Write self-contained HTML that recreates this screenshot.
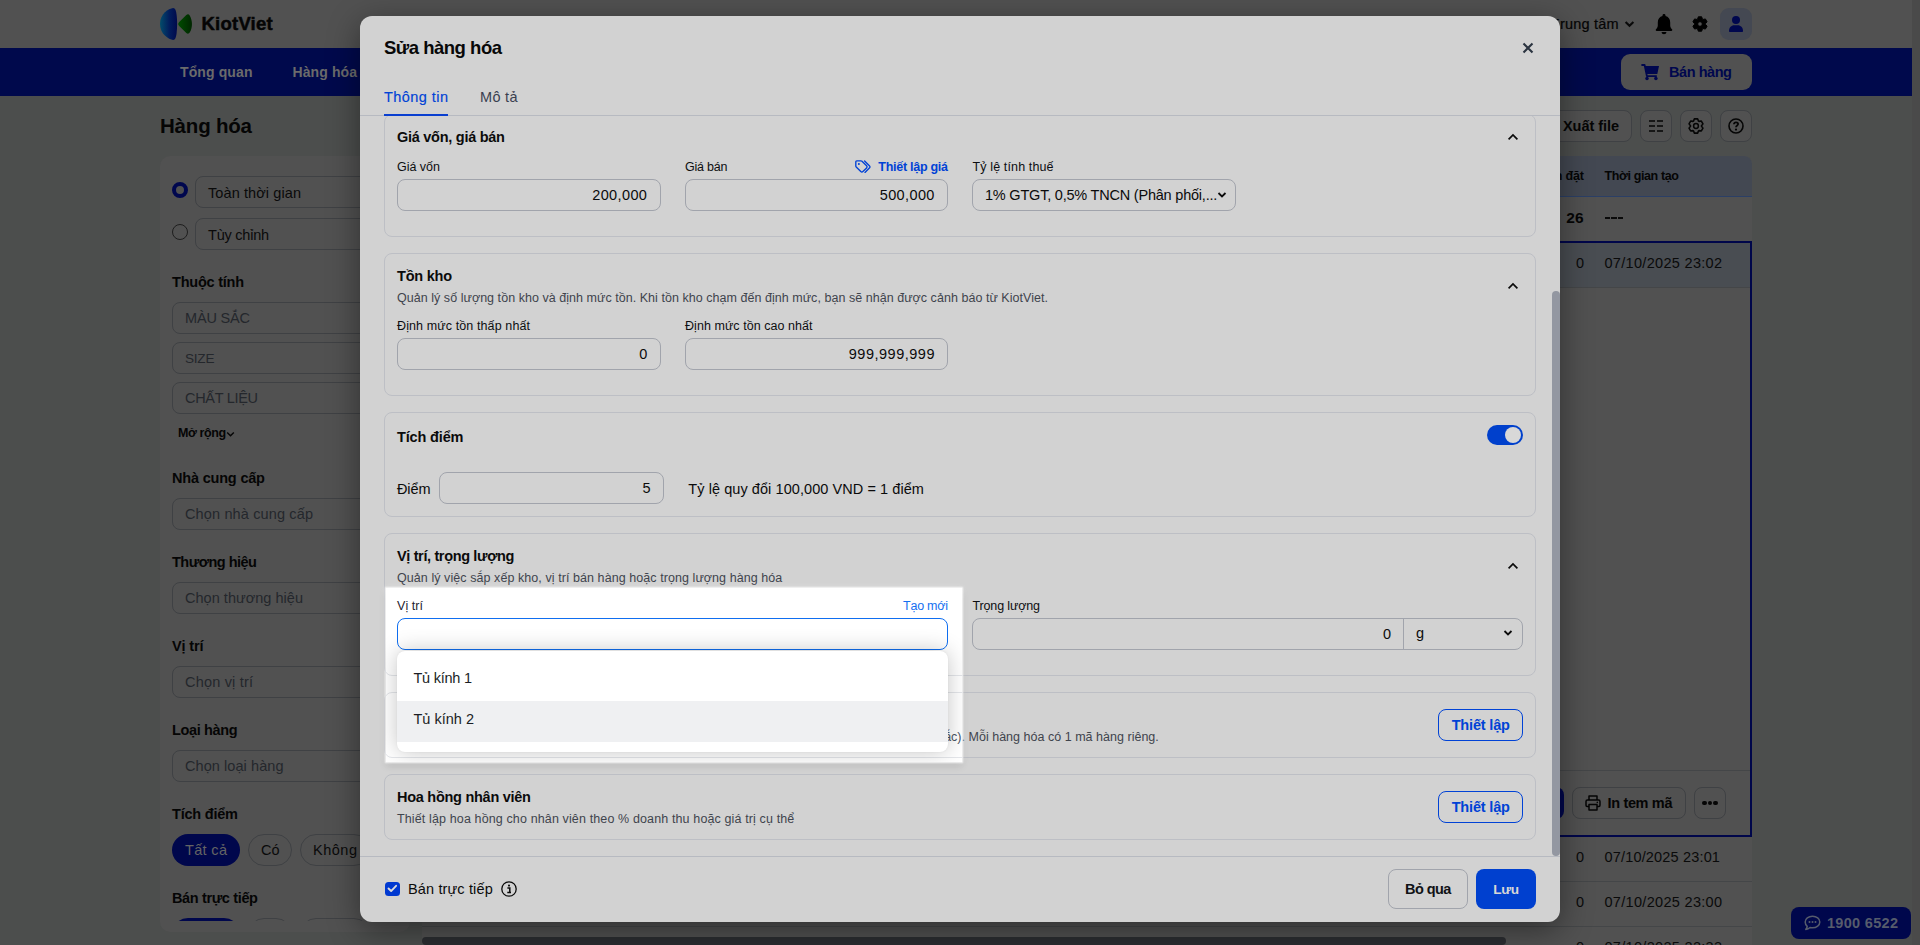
<!DOCTYPE html>
<html lang="vi"><head><meta charset="utf-8"><title>KiotViet - Sửa hàng hóa</title><style>
html,body{margin:0;padding:0}
body{width:1920px;height:945px;overflow:hidden;position:relative;background:#4c4e4d;font-family:"Liberation Sans",sans-serif}
.a{position:absolute;box-sizing:border-box}
.t{position:absolute;white-space:nowrap;line-height:1}
.L{position:absolute;left:0;top:0;width:1920px;height:945px}
svg{position:absolute;overflow:visible}
</style></head><body>
<div class="L" id="page">
<div class="a" style="left:0px;top:0px;width:1912px;height:48px;background:#515151;"></div>
<div class="a" style="left:1912px;top:0px;width:8px;height:945px;background:#4a4a4a;"></div>
<svg style="left:160px;top:8px" width="33" height="32" viewBox="0 0 33 32">
<defs><linearGradient id="lg1" x1="0" y1="0" x2="1" y2="0"><stop offset="0" stop-color="#034c6a"></stop><stop offset=".55" stop-color="#021d5c"></stop><stop offset="1" stop-color="#000a4c"></stop></linearGradient>
<linearGradient id="lg2" x1="0" y1="0" x2="1" y2="0"><stop offset="0" stop-color="#004c00"></stop><stop offset="1" stop-color="#002600"></stop></linearGradient></defs>
<path d="M13.2 0.1 C15.2 0.2 16.1 2.6 16.6 6.8 C17.3 12.9 17.3 19.1 16.6 25.2 C16.1 29.4 15.2 31.8 13.2 31.9 C8.6 31.4 0 26.2 0 16 C0 5.8 8.6 0.6 13.2 0.1Z" fill="url(#lg1)"></path>
<path d="M18.2 16 C18.2 15.3 18.6 14.7 19.2 14.1 L26.3 7 C27.5 5.9 28.9 6 29.7 7.4 C32.7 12.8 32.7 19.2 29.7 24.6 C28.9 26 27.5 26.1 26.3 25 L19.2 17.9 C18.6 17.3 18.2 16.7 18.2 16Z" fill="url(#lg2)"></path>
</svg>
<span class="t" style="top: 14.75px; font-size: 18.5px; color: rgb(5, 5, 5); left: 201.5px; font-weight: 700; -webkit-text-stroke: 0.45px rgb(5, 5, 5); letter-spacing: 0.23px;">KiotViet</span>
<span class="t" style="top:16.75px;font-size:14.5px;color:#0a0a0a;right:360.79999999999995px;">T</span>
<span class="t" style="top: 16.75px; font-size: 14.5px; color: rgb(5, 5, 5); left: 1560px; -webkit-text-stroke: 0.2px rgb(5, 5, 5); letter-spacing: 0.18px;">rung tâm</span>
<svg style="left:1624px;top:19px" width="11" height="10" viewBox="0 0 11 10"><path d="M1.6 3 L5.5 6.8 L9.4 3" fill="none" stroke="#0a0a0a" stroke-width="2.1"></path></svg>
<svg style="left:1655px;top:13px" width="18" height="22" viewBox="0 0 18 22"><path d="M9 1 C9.9 1 10.5 1.6 10.5 2.4 L10.5 3 C13.4 3.7 15.2 6.2 15.2 9.3 L15.2 12.5 C15.2 14 15.9 15.3 17 16.3 C17.6 16.9 17.3 18 16.3 18 L1.7 18 C0.7 18 0.4 16.9 1 16.3 C2.1 15.3 2.8 14 2.8 12.5 L2.8 9.3 C2.8 6.2 4.6 3.7 7.5 3 L7.5 2.4 C7.5 1.6 8.1 1 9 1Z M6.6 19 L11.4 19 C11.4 20.3 10.3 21.3 9 21.3 C7.7 21.3 6.6 20.3 6.6 19Z" fill="#000"></path></svg>
<svg style="left:1692px;top:16px" width="16" height="16" viewBox="0 0 16 16"><path fill="#000" fill-rule="evenodd" stroke="#000" stroke-width="1" stroke-linejoin="round" d="M5.55 3.19 L6.34 0.79 L9.66 0.79 L10.45 3.19 L10.94 3.47 L13.41 2.95 L15.08 5.84 L13.39 7.72 L13.39 8.28 L15.08 10.16 L13.41 13.05 L10.94 12.53 L10.45 12.81 L9.66 15.21 L6.34 15.21 L5.55 12.81 L5.06 12.53 L2.59 13.05 L0.92 10.16 L2.61 8.28 L2.61 7.72 L0.92 5.84 L2.59 2.95 L5.06 3.47Z M8 5.7 A2.3 2.3 0 1 0 8 10.3 A2.3 2.3 0 1 0 8 5.7Z"></path></svg>
<div class="a" style="left:1720px;top:8px;width:32px;height:32px;background:#444852;border-radius:9px;"></div>
<svg style="left:1729px;top:16px" width="14" height="16" viewBox="0 0 14 16"><circle cx="7" cy="4" r="4" fill="#00074e"></circle><path d="M0 15 C0 11.5 2.5 9.3 5 9.3 L9 9.3 C11.5 9.3 14 11.5 14 15 C14 15.6 13.6 16 13 16 L1 16 C0.4 16 0 15.6 0 15Z" fill="#00074e"></path></svg>
<div class="a" style="left:0px;top:48px;width:1912px;height:48px;background:#00094c;"></div>
<span class="t" style="top: 65px; font-size: 14px; color: rgb(107, 107, 107); left: 180px; font-weight: 700; letter-spacing: 0.12px;">Tổng quan</span>
<span class="t" style="top: 65px; font-size: 14px; color: rgb(107, 107, 107); left: 292.5px; font-weight: 700; letter-spacing: 0.1px;">Hàng hóa</span>
<div class="a" style="left:1621px;top:54px;width:131px;height:36px;background:#515151;border-radius:9px;"></div>
<svg style="left:1641px;top:64px" width="18" height="16" viewBox="0 0 18 16"><path d="M0.4 1 H3.6 L5.9 12.1 H15.8" fill="none" stroke="#00074e" stroke-width="1.8" stroke-linejoin="round"></path><path d="M3.9 1.9 L18 1.9 L16.3 9.9 L5.4 9.9Z" fill="#00074e"></path><circle cx="6" cy="14.4" r="1.75" fill="#00074e"></circle><circle cx="14.9" cy="14.4" r="1.75" fill="#00074e"></circle></svg>
<span class="t" style="top: 64.75px; font-size: 14.5px; color: rgb(0, 7, 78); left: 1669px; font-weight: 700; letter-spacing: -0.44px;">Bán hàng</span>
<span class="t" style="top: 115.75px; font-size: 20.5px; color: rgb(5, 5, 5); left: 160px; font-weight: 700; letter-spacing: -0.2px;">Hàng hóa</span>
<div class="a" style="left:160px;top:156px;width:250px;height:776px;background:#515151;border-radius:10px"></div>
<div class="L" style="clip-path:inset(156px 1510px 24px 160px)">
<div class="a" style="left:172px;top:182px;width:16px;height:16px;border:4.5px solid #00074e;border-radius:8px;"></div>
<div class="a" style="left:172px;top:224px;width:16px;height:16px;border:1px solid #1e1e1e;border-radius:8px;"></div>
<div class="a" style="left:195px;top:176px;width:260px;height:32px;border:1px solid #3f4144;border-radius:8px;"></div>
<div class="a" style="left:195px;top:218px;width:260px;height:32px;border:1px solid #3f4144;border-radius:8px;"></div>
<span class="t" style="top: 186.05px; font-size: 14.5px; color: rgb(10, 10, 10); left: 208px; letter-spacing: 0.1px;">Toàn thời gian</span>
<span class="t" style="top: 228.05px; font-size: 14.5px; color: rgb(10, 10, 10); left: 208px; letter-spacing: -0.23px;">Tùy chỉnh</span>
<span class="t" style="top: 274.75px; font-size: 14.5px; color: rgb(5, 5, 5); left: 172px; font-weight: 700; letter-spacing: -0.23px;">Thuộc tính</span>
<div class="a" style="left:172px;top:302px;width:280px;height:32px;border:1px solid #3f4144;border-radius:8px;"></div>
<span class="t" style="top: 311.25px; font-size: 14.5px; color: rgb(36, 39, 44); left: 185px; letter-spacing: -0.18px;">MÀU SẮC</span>
<div class="a" style="left:172px;top:342px;width:280px;height:32px;border:1px solid #3f4144;border-radius:8px;"></div>
<span class="t" style="top: 351.7px; font-size: 13.6px; color: rgb(36, 39, 44); left: 185px; letter-spacing: -0.24px;">SIZE</span>
<div class="a" style="left:172px;top:382px;width:280px;height:32px;border:1px solid #3f4144;border-radius:8px;"></div>
<span class="t" style="top: 391.25px; font-size: 14.5px; color: rgb(36, 39, 44); left: 185px; letter-spacing: -0.31px;">CHẤT LIỆU</span>
<span class="t" style="top: 427.25px; font-size: 12.5px; color: rgb(5, 5, 5); left: 178px; font-weight: 700; letter-spacing: -0.42px;">Mở rộng</span>
<svg style="left:226px;top:430.5px" width="9" height="7" viewBox="0 0 9 7"><path d="M1.2 1.5 L4.5 4.8 L7.8 1.5" fill="none" stroke="#050505" stroke-width="1.4"></path></svg>
<span class="t" style="top: 470.75px; font-size: 14.5px; color: rgb(5, 5, 5); left: 172px; font-weight: 700; letter-spacing: -0.19px;">Nhà cung cấp</span>
<div class="a" style="left:172px;top:498px;width:280px;height:32px;border:1px solid #3f4144;border-radius:8px;"></div>
<span class="t" style="top: 507.25px; font-size: 14.5px; color: rgb(36, 39, 44); left: 185px; letter-spacing: 0.14px;">Chọn nhà cung cấp</span>
<span class="t" style="top: 554.75px; font-size: 14.5px; color: rgb(5, 5, 5); left: 172px; font-weight: 700; letter-spacing: -0.51px;">Thương hiệu</span>
<div class="a" style="left:172px;top:582px;width:280px;height:32px;border:1px solid #3f4144;border-radius:8px;"></div>
<span class="t" style="top: 591.25px; font-size: 14.5px; color: rgb(36, 39, 44); left: 185px; letter-spacing: 0.03px;">Chọn thương hiệu</span>
<span class="t" style="top: 638.75px; font-size: 14.5px; color: rgb(5, 5, 5); left: 172px; font-weight: 700; letter-spacing: -0.15px;">Vị trí</span>
<div class="a" style="left:172px;top:666px;width:280px;height:32px;border:1px solid #3f4144;border-radius:8px;"></div>
<span class="t" style="top: 675.25px; font-size: 14.5px; color: rgb(36, 39, 44); left: 185px; letter-spacing: 0.19px;">Chọn vị trí</span>
<span class="t" style="top: 722.75px; font-size: 14.5px; color: rgb(5, 5, 5); left: 172px; font-weight: 700; letter-spacing: -0.37px;">Loại hàng</span>
<div class="a" style="left:172px;top:750px;width:280px;height:32px;border:1px solid #3f4144;border-radius:8px;"></div>
<span class="t" style="top: 759.25px; font-size: 14.5px; color: rgb(36, 39, 44); left: 185px; letter-spacing: 0.07px;">Chọn loại hàng</span>
<span class="t" style="top: 806.75px; font-size: 14.5px; color: rgb(5, 5, 5); left: 172px; font-weight: 700; letter-spacing: -0.21px;">Tích điểm</span>
<div class="a" style="left:172px;top:834px;width:68px;height:32px;background:#00074c;border-radius:16px;"></div>
<span class="t" style="top: 843.25px; font-size: 14.5px; color: rgb(100, 100, 100); left: 185px; letter-spacing: 0.34px;">Tất cả</span>
<div class="a" style="left:248px;top:834px;width:44px;height:32px;border:1px solid #3f4144;border-radius:16px;"></div>
<span class="t" style="top: 843.25px; font-size: 14.5px; color: rgb(10, 10, 10); left: 261px; letter-spacing: -0.05px;">Có</span>
<div class="a" style="left:300px;top:834px;width:70px;height:32px;border:1px solid #3f4144;border-radius:16px;"></div>
<span class="t" style="top: 843.25px; font-size: 14.5px; color: rgb(10, 10, 10); left: 313px; letter-spacing: 0.52px;">Không</span>
<span class="t" style="top: 890.75px; font-size: 14.5px; color: rgb(5, 5, 5); left: 172px; font-weight: 700; letter-spacing: -0.36px;">Bán trực tiếp</span>
<div class="a" style="left:172px;top:918px;width:68px;height:32px;background:#00074c;border-radius:16px;"></div>
<span class="t" style="top: 927.25px; font-size: 14.5px; color: rgb(100, 100, 100); left: 185px; letter-spacing: 0.34px;">Tất cả</span>
<div class="a" style="left:248px;top:918px;width:44px;height:32px;border:1px solid #3f4144;border-radius:16px;"></div>
<span class="t" style="top: 927.25px; font-size: 14.5px; color: rgb(10, 10, 10); left: 261px; letter-spacing: -0.05px;">Có</span>
<div class="a" style="left:300px;top:918px;width:70px;height:32px;border:1px solid #3f4144;border-radius:16px;"></div>
<span class="t" style="top: 927.25px; font-size: 14.5px; color: rgb(10, 10, 10); left: 313px; letter-spacing: 0.52px;">Không</span>
</div>
<div class="a" style="left:1500px;top:110px;width:132px;height:32px;background:#515151;border:1px solid #3f4144;border-radius:8px;"></div>
<span class="t" style="top: 119.25px; font-size: 14.5px; color: rgb(5, 5, 5); left: 1563px; font-weight: 700; letter-spacing: -0.05px;">Xuất file</span>
<div class="a" style="left:1640px;top:110px;width:32px;height:32px;background:#515151;border:1px solid #3f4144;border-radius:8px;"></div>
<div class="a" style="left:1680px;top:110px;width:32px;height:32px;background:#515151;border:1px solid #3f4144;border-radius:8px;"></div>
<div class="a" style="left:1720px;top:110px;width:32px;height:32px;background:#515151;border:1px solid #3f4144;border-radius:8px;"></div>
<svg style="left:1648px;top:119px" width="16" height="14" viewBox="0 0 16 14"><g stroke="#050505" stroke-width="1.7"><path d="M1 2 H7 M9 2 H15 M1 7 H7 M9 7 H15 M1 12 H7 M9 12 H15"></path></g></svg>
<svg style="left:1688px;top:118px" width="16" height="16" viewBox="0 0 16 16"><path fill="none" stroke="#050505" stroke-width="1.55" stroke-linejoin="round" d="M5.50 3.10 L6.36 0.89 L9.64 0.89 L10.50 3.10 L11.00 3.39 L13.34 3.02 L14.98 5.87 L13.49 7.71 L13.49 8.29 L14.98 10.13 L13.34 12.98 L11.00 12.61 L10.50 12.90 L9.64 15.11 L6.36 15.11 L5.50 12.90 L5.00 12.61 L2.66 12.98 L1.02 10.13 L2.51 8.29 L2.51 7.71 L1.02 5.87 L2.66 3.02 L5.00 3.39Z"></path><circle cx="8" cy="8" r="2.4" fill="none" stroke="#050505" stroke-width="1.5"></circle></svg>
<svg style="left:1728px;top:118px" width="16" height="16" viewBox="0 0 16 16"><circle cx="8" cy="8" r="7" fill="none" stroke="#050505" stroke-width="1.6"></circle><path d="M5.9 6.3 C5.9 5 6.8 4.3 8 4.3 C9.2 4.3 10.1 5 10.1 6.1 C10.1 7.5 8 7.5 8 9.3" fill="none" stroke="#050505" stroke-width="1.8"></path><circle cx="8" cy="11.6" r="1.1" fill="#050505"></circle></svg>
<div class="a" style="left:422px;top:156px;width:1330px;height:789px;background:#515151;border-radius:8px 8px 0 0;overflow:hidden">
<div class="a" style="left:0;top:0;width:1330px;height:40px;background:#434852"></div>
<div class="a" style="left:0;top:40px;width:1330px;height:1px;background:#2b3f66"></div>
<div class="a" style="left:0;top:87px;width:1330px;height:45px;background:#494d52"></div>
<div class="a" style="left:0;top:131px;width:1330px;height:1px;background:#444648"></div>
</div>
<span class="t" style="top: 169.75px; font-size: 12.5px; color: rgb(5, 5, 5); left: 1565.5px; font-weight: 700; letter-spacing: -0.12px;">đặt</span>
<span class="t" style="top:169.75px;font-size:12.5px;color:#050505;right:357.5px;font-weight:700;">n</span>
<span class="t" style="top: 169.75px; font-size: 12.5px; color: rgb(5, 5, 5); left: 1604.5px; font-weight: 700; letter-spacing: -0.38px;">Thời gian tạo</span>
<span class="t" style="top: 209.75px; font-size: 15.5px; color: rgb(5, 5, 5); right: 336px; font-weight: 700; letter-spacing: 0.25px;">26</span>
<div class="a" style="left:1605px;top:217px;width:5.2px;height:1.5px;background:#0a0a0a;"></div>
<div class="a" style="left:1611.4px;top:217px;width:5.2px;height:1.5px;background:#0a0a0a;"></div>
<div class="a" style="left:1617.8px;top:217px;width:5.2px;height:1.5px;background:#0a0a0a;"></div>
<div class="a" style="left:422px;top:241px;width:1330px;height:596px;border:2px solid #00064a;"></div>
<span class="t" style="top:256.25px;font-size:14.5px;color:#0a0a0a;right:336px;">0</span>
<span class="t" style="top: 256.25px; font-size: 14.5px; color: rgb(10, 10, 10); left: 1604.5px; letter-spacing: 0.31px;">07/10/2025 23:02</span>
<div class="a" style="left:424px;top:770px;width:1326px;height:1px;background:#444648;"></div>
<div class="a" style="left:1450px;top:787px;width:114px;height:32px;background:#00074c;border-radius:8px;"></div>
<div class="a" style="left:1572px;top:787px;width:114px;height:32px;border:1px solid #3f4144;border-radius:8px;"></div>
<svg style="left:1585px;top:795px" width="16" height="16" viewBox="0 0 16 16"><g fill="none" stroke="#050505" stroke-width="1.5" stroke-linejoin="round"><path d="M4 5 V1 H12 V5"></path><path d="M4 11.5 H2.2 C1.5 11.5 1 11 1 10.3 V6.5 C1 5.7 1.6 5 2.4 5 H13.6 C14.4 5 15 5.7 15 6.5 V10.3 C15 11 14.5 11.5 13.8 11.5 H12"></path><path d="M4 9.5 H12 V15 H4Z"></path></g><circle cx="12.3" cy="7.4" r=".8" fill="#050505"></circle></svg>
<span class="t" style="top: 796.25px; font-size: 14.5px; color: rgb(5, 5, 5); left: 1607.5px; font-weight: 700; letter-spacing: -0.34px;">In tem mã</span>
<div class="a" style="left:1694px;top:787px;width:32px;height:32px;border:1px solid #3f4144;border-radius:8px;"></div>
<div class="a" style="left:1702.4px;top:800.9px;width:4.2px;height:4.2px;background:#050505;border-radius:2.1px;"></div>
<div class="a" style="left:1707.9px;top:800.9px;width:4.2px;height:4.2px;background:#050505;border-radius:2.1px;"></div>
<div class="a" style="left:1713.4px;top:800.9px;width:4.2px;height:4.2px;background:#050505;border-radius:2.1px;"></div>
<span class="t" style="top:850.25px;font-size:14.5px;color:#0a0a0a;right:336px;">0</span>
<span class="t" style="top: 850.25px; font-size: 14.5px; color: rgb(10, 10, 10); left: 1604.5px; letter-spacing: 0.17px;">07/10/2025 23:01</span>
<span class="t" style="top:895.25px;font-size:14.5px;color:#0a0a0a;right:336px;">0</span>
<span class="t" style="top: 895.25px; font-size: 14.5px; color: rgb(10, 10, 10); left: 1604.5px; letter-spacing: 0.31px;">07/10/2025 23:00</span>
<span class="t" style="top:940.25px;font-size:14.5px;color:#0a0a0a;right:336px;">0</span>
<span class="t" style="top: 940.25px; font-size: 14.5px; color: rgb(10, 10, 10); left: 1604.5px; letter-spacing: 0.31px;">07/10/2025 22:33</span>
<div class="a" style="left:422px;top:881px;width:1330px;height:1px;background:#444648;"></div>
<div class="a" style="left:422px;top:926px;width:1330px;height:1px;background:#444648;"></div>
<div class="a" style="left:422px;top:937px;width:1084px;height:8px;background:#2b2d31;border-radius:4px;"></div>
<div class="a" style="left:1791px;top:907px;width:120px;height:32px;background:#00074c;border-radius:8px;"></div>
<svg style="left:1804px;top:915px" width="17" height="16" viewBox="0 0 17 16"><path d="M8.5 1.2 C12.6 1.2 15.8 3.8 15.8 7 C15.8 10.2 12.6 12.8 8.5 12.8 C7.6 12.8 6.8 12.7 6 12.5 C5 13.4 3.6 14.2 1.8 14.4 C2.6 13.6 3.1 12.6 3.2 11.4 C1.9 10.3 1.2 8.7 1.2 7 C1.2 3.8 4.4 1.2 8.5 1.2Z" fill="none" stroke="#565c6c" stroke-width="1.5" stroke-linejoin="round"></path><circle cx="5.5" cy="7" r="1" fill="#565c6c"></circle><circle cx="8.5" cy="7" r="1" fill="#565c6c"></circle><circle cx="11.5" cy="7" r="1" fill="#565c6c"></circle></svg>
<span class="t" style="top: 916.25px; font-size: 14.5px; color: rgb(86, 92, 108); left: 1827px; font-weight: 700; letter-spacing: 0.31px;">1900 6522</span>
</div>
<div class="a" style="left:360px;top:16px;width:1200px;height:906px;background:#d2d2d2;border-radius:12px;box-shadow:0 8px 32px rgba(0,0,0,.42)"></div>
<span class="t" style="top: 38.75px; font-size: 18.5px; color: rgb(8, 8, 8); left: 384px; font-weight: 700; letter-spacing: -0.49px;">Sửa hàng hóa</span>
<svg style="left:1522px;top:42px" width="12" height="12" viewBox="0 0 12 12"><path d="M1.5 1.5 L10.5 10.5 M10.5 1.5 L1.5 10.5" stroke="#2b3440" stroke-width="2.1" fill="none"></path></svg>
<span class="t" style="top: 89.75px; font-size: 14.5px; color: rgb(0, 66, 214); left: 384px; -webkit-text-stroke: 0.15px rgb(0, 66, 214); letter-spacing: 0.44px;">Thông tin</span>
<span class="t" style="top: 89.75px; font-size: 14.5px; color: rgb(58, 64, 80); left: 480px; letter-spacing: 0.31px;">Mô tả</span>
<div class="a" style="left:360px;top:115px;width:1200px;height:1px;background:#b7bac1;"></div>
<div class="a" style="left:384px;top:114px;width:64px;height:2px;background:#0a3fd0;"></div>
<div class="L" style="clip-path:inset(116px 360px 89px 360px)">
<div class="a" style="left:384px;top:114px;width:1152px;height:123px;border:1px solid #bdbfc5;border-radius:8px;"></div>
<span class="t" style="top: 129.75px; font-size: 14.5px; color: rgb(11, 11, 11); left: 397px; font-weight: 700; letter-spacing: -0.27px;">Giá vốn, giá bán</span>
<svg style="left:1507.3px;top:132.8px" width="12" height="8" viewBox="0 0 12 8"><path d="M1.6 6.4 L6 2 L10.4 6.4" fill="none" stroke="#0b0b0b" stroke-width="1.7"></path></svg>
<span class="t" style="top: 160.75px; font-size: 12.5px; color: rgb(13, 14, 17); left: 397px; letter-spacing: -0.02px;">Giá vốn</span>
<span class="t" style="top: 160.75px; font-size: 12.5px; color: rgb(13, 14, 17); left: 685px; letter-spacing: -0.21px;">Giá bán</span>
<span class="t" style="top: 160.75px; font-size: 12.5px; color: rgb(13, 14, 17); left: 972.5px; letter-spacing: 0.13px;">Tỷ lệ tính thuế</span>
<svg style="left:855px;top:160px" width="16" height="14" viewBox="0 0 16 14"><g fill="none" stroke="#0042d6" stroke-width="1.35" stroke-linejoin="round" stroke-linecap="round"><path d="M0.8 1.8 C0.8 1.2 1.2 0.8 1.8 0.8 L6 0.8 C6.4 0.8 6.7 0.9 7 1.2 L11.6 5.8 C12.2 6.4 12.2 7.3 11.6 7.9 L7.9 11.6 C7.3 12.2 6.4 12.2 5.8 11.6 L1.2 7 C0.9 6.7 0.8 6.4 0.8 6Z"></path><path d="M9.6 1 L14.6 6 C15.1 6.5 15.1 7.3 14.6 7.8 L10 12.4"></path></g><circle cx="3.9" cy="3.9" r="1" fill="#0042d6"></circle></svg>
<span class="t" style="top: 160.75px; font-size: 12.5px; color: rgb(0, 66, 214); left: 878.3px; font-weight: 700; letter-spacing: -0.27px;">Thiết lập giá</span>
<div class="a" style="left:397px;top:179px;width:264px;height:32px;border:1px solid #a1a4ac;border-radius:8px;"></div>
<div class="a" style="left:685px;top:179px;width:263px;height:32px;border:1px solid #a1a4ac;border-radius:8px;"></div>
<div class="a" style="left:972px;top:179px;width:264px;height:32px;border:1px solid #a1a4ac;border-radius:8px;"></div>
<span class="t" style="top: 188.25px; font-size: 14.5px; color: rgb(11, 11, 11); right: 1272.7px; letter-spacing: 0.38px;">200,000</span>
<span class="t" style="top: 188.25px; font-size: 14.5px; color: rgb(11, 11, 11); right: 985.2px; letter-spacing: 0.38px;">500,000</span>
<span class="t" style="top: 188.25px; font-size: 14.5px; color: rgb(11, 11, 11); left: 985px; letter-spacing: -0.21px;">1% GTGT, 0,5% TNCN (Phân phối,...</span>
<svg style="left:1216.5px;top:190.5px" width="10" height="8" viewBox="0 0 10 8"><path d="M1.5 2 L5 5.5 L8.5 2" fill="none" stroke="#0b0b0b" stroke-width="1.8"></path></svg>
<div class="a" style="left:384px;top:253px;width:1152px;height:143px;border:1px solid #bdbfc5;border-radius:8px;"></div>
<span class="t" style="top: 268.75px; font-size: 14.5px; color: rgb(11, 11, 11); left: 397px; font-weight: 700; letter-spacing: -0.23px;">Tồn kho</span>
<svg style="left:1507.3px;top:282px" width="12" height="8" viewBox="0 0 12 8"><path d="M1.6 6.4 L6 2 L10.4 6.4" fill="none" stroke="#0b0b0b" stroke-width="1.7"></path></svg>
<span class="t" style="top: 291.75px; font-size: 12.5px; color: rgb(63, 68, 77); left: 397px; letter-spacing: 0.04px;">Quản lý số lượng tồn kho và định mức tồn. Khi tồn kho chạm đến định mức, bạn sẽ nhận được cảnh báo từ KiotViet.</span>
<span class="t" style="top: 319.75px; font-size: 12.5px; color: rgb(13, 14, 17); left: 397px; letter-spacing: 0.11px;">Định mức tồn thấp nhất</span>
<span class="t" style="top: 319.75px; font-size: 12.5px; color: rgb(13, 14, 17); left: 685px; letter-spacing: 0.05px;">Định mức tồn cao nhất</span>
<div class="a" style="left:397px;top:338px;width:264px;height:32px;border:1px solid #a1a4ac;border-radius:8px;"></div>
<div class="a" style="left:685px;top:338px;width:263px;height:32px;border:1px solid #a1a4ac;border-radius:8px;"></div>
<span class="t" style="top:347.25px;font-size:14.5px;color:#0b0b0b;right:1272.7px;">0</span>
<span class="t" style="top: 347.25px; font-size: 14.5px; color: rgb(11, 11, 11); right: 985px; letter-spacing: 0.51px;">999,999,999</span>
<div class="a" style="left:384px;top:412px;width:1152px;height:105px;border:1px solid #bdbfc5;border-radius:8px;"></div>
<span class="t" style="top: 429.75px; font-size: 14.5px; color: rgb(11, 11, 11); left: 397px; font-weight: 700; letter-spacing: -0.15px;">Tích điểm</span>
<div class="a" style="left:1487px;top:425px;width:36px;height:20px;background:#0040cc;border-radius:10px;"></div>
<div class="a" style="left:1505px;top:427px;width:16px;height:16px;background:#d8d8d8;border-radius:8px;"></div>
<span class="t" style="top: 481.75px; font-size: 14.5px; color: rgb(11, 11, 11); left: 397px; letter-spacing: -0.11px;">Điểm</span>
<div class="a" style="left:439px;top:472px;width:225px;height:32px;border:1px solid #a1a4ac;border-radius:8px;"></div>
<span class="t" style="top:481.25px;font-size:14.5px;color:#0b0b0b;right:1269.4px;">5</span>
<span class="t" style="top: 481.75px; font-size: 14.5px; color: rgb(11, 11, 11); left: 688.3px; letter-spacing: 0.07px;">Tỷ lệ quy đổi 100,000 VND = 1 điểm</span>
<div class="a" style="left:384px;top:533px;width:1152px;height:143px;border:1px solid #bdbfc5;border-radius:8px;"></div>
<span class="t" style="top: 548.75px; font-size: 14.5px; color: rgb(11, 11, 11); left: 397px; font-weight: 700; letter-spacing: -0.36px;">Vị trí, trọng lượng</span>
<svg style="left:1507.3px;top:562px" width="12" height="8" viewBox="0 0 12 8"><path d="M1.6 6.4 L6 2 L10.4 6.4" fill="none" stroke="#0b0b0b" stroke-width="1.7"></path></svg>
<span class="t" style="top: 571.75px; font-size: 12.5px; color: rgb(63, 68, 77); left: 397px; letter-spacing: 0.07px;">Quản lý việc sắp xếp kho, vị trí bán hàng hoặc trọng lượng hàng hóa</span>
<span class="t" style="top: 599.75px; font-size: 12.5px; color: rgb(13, 14, 17); left: 972.5px; letter-spacing: -0.14px;">Trọng lượng</span>
<div class="a" style="left:972px;top:618px;width:551px;height:32px;border:1px solid #a1a4ac;border-radius:8px;"></div>
<div class="a" style="left:1403px;top:619px;width:1px;height:30px;background:#a1a4ac;"></div>
<span class="t" style="top:627.25px;font-size:14.5px;color:#0b0b0b;right:529px;">0</span>
<span class="t" style="top:626.25px;font-size:14.5px;color:#0b0b0b;left:1416px;">g</span>
<svg style="left:1503px;top:628.5px" width="10" height="8" viewBox="0 0 10 8"><path d="M1.5 2 L5 5.5 L8.5 2" fill="none" stroke="#0b0b0b" stroke-width="1.8"></path></svg>
<div class="a" style="left:384px;top:692px;width:1152px;height:66px;border:1px solid #bdbfc5;border-radius:8px;"></div>
<span class="t" style="top:707.75px;font-size:14.5px;color:#0b0b0b;left:397px;font-weight:700;">Thuộc tính</span>
<span class="t" style="top:730.75px;font-size:12.5px;color:#3f444d;right:958.5px;">Tạo nhiều phiên bản cho hàng hóa theo thuộc tính (kích cỡ, màu sắc)</span>
<span class="t" style="top: 730.75px; font-size: 12.5px; color: rgb(63, 68, 77); left: 961.5px; letter-spacing: 0.02px;">. Mỗi hàng hóa có 1 mã hàng riêng.</span>
<div class="a" style="left:1438px;top:709px;width:85px;height:32px;border:1px solid #0042d6;border-radius:8px;"></div>
<span class="t" style="top: 718.25px; font-size: 14.5px; color: rgb(0, 66, 214); left: 1451.7px; font-weight: 700; letter-spacing: -0.17px;">Thiết lập</span>
<div class="a" style="left:384px;top:774px;width:1152px;height:66px;border:1px solid #bdbfc5;border-radius:8px;"></div>
<span class="t" style="top: 789.75px; font-size: 14.5px; color: rgb(11, 11, 11); left: 397px; font-weight: 700; letter-spacing: -0.27px;">Hoa hồng nhân viên</span>
<span class="t" style="top: 812.75px; font-size: 12.5px; color: rgb(63, 68, 77); left: 397px; letter-spacing: 0.13px;">Thiết lập hoa hồng cho nhân viên theo % doanh thu hoặc giá trị cụ thể</span>
<div class="a" style="left:1438px;top:791px;width:85px;height:32px;border:1px solid #0042d6;border-radius:8px;"></div>
<span class="t" style="top: 800.25px; font-size: 14.5px; color: rgb(0, 66, 214); left: 1451.7px; font-weight: 700; letter-spacing: -0.17px;">Thiết lập</span>
</div>
<div class="a" style="left:1552px;top:291px;width:8px;height:565px;background:#9397a1;border-radius:4px;"></div>
<div class="a" style="left:360px;top:856px;width:1200px;height:1px;background:#b7bac1;"></div>
<div class="a" style="left:385px;top:881.5px;width:14.6px;height:14.6px;background:#0039d1;border-radius:3.5px;"></div>
<svg style="left:385px;top:881.3px" width="14.6" height="14.6" viewBox="0 0 15 15"><path d="M3.6 7.7 L6.3 10.3 L11.4 4.9" fill="none" stroke="#dcdcdc" stroke-width="1.9" stroke-linecap="round" stroke-linejoin="round"></path></svg>
<span class="t" style="top: 881.75px; font-size: 14.5px; color: rgb(11, 11, 11); left: 408px; letter-spacing: 0.14px;">Bán trực tiếp</span>
<svg style="left:501px;top:881px" width="16" height="16" viewBox="0 0 16 16"><circle cx="8" cy="8" r="7.2" fill="none" stroke="#0b0b0b" stroke-width="1.3"></circle><circle cx="8" cy="4.6" r="1.05" fill="#0b0b0b"></circle><path d="M6.4 7 H8.8 V11.3 M6.3 11.5 H10" fill="none" stroke="#0b0b0b" stroke-width="1.5"></path></svg>
<div class="a" style="left:1388px;top:869px;width:80px;height:40px;border:1px solid #a1a4ac;border-radius:8px;"></div>
<span class="t" style="top: 882.25px; font-size: 14.5px; color: rgb(16, 18, 22); left: 1405px; font-weight: 700; letter-spacing: -0.57px;">Bỏ qua</span>
<div class="a" style="left:1476px;top:869px;width:60px;height:40px;background:#0040cf;border-radius:8px;"></div>
<span class="t" style="top: 882.7px; font-size: 13.6px; color: rgb(214, 214, 214); left: 1493.3px; font-weight: 700; letter-spacing: -0.38px;">Lưu</span>
<div class="a" style="left:385.6px;top:588.3px;width:576.1px;height:173.4px;background:#fff;box-shadow:0 0 1.5px 1px rgba(255,255,255,.8),0 0 5px 1px rgba(255,255,255,.3),0 4px 7px rgba(0,0,0,.13)"></div>
<div class="L" style="clip-path:inset(588px 958px 183px 385px)">
<div class="a" style="left:384px;top:533px;width:1152px;height:143px;border:1px solid #e4e6ea;border-radius:8px;"></div>
<div class="a" style="left:384px;top:692px;width:1152px;height:66px;border:1px solid #e4e6ea;border-radius:8px;"></div>
<span class="t" style="top:730.75px;font-size:12.5px;color:#4b5563;right:958.5px;">Tạo nhiều phiên bản cho hàng hóa theo thuộc tính (kích cỡ, màu sắc)</span>
<span class="t" style="top: 599.75px; font-size: 12.5px; color: rgb(31, 36, 48); left: 397px; letter-spacing: 0.06px;">Vị trí</span>
<span class="t" style="top: 599.75px; font-size: 12.5px; color: rgb(21, 112, 240); left: 903px; letter-spacing: -0.23px;">Tạo mới</span>
<div class="a" style="left:397px;top:618px;width:551px;height:32px;background:#fff;border:1.5px solid #0f6ef0;border-radius:8px;"></div>
<div class="a" style="left:397px;top:651px;width:551px;height:101px;background:#fff;border-radius:8px;box-shadow:0 0 22px rgba(0,0,0,.23),0 0 2px rgba(0,0,0,.06);"></div>
<div class="a" style="left:397px;top:701px;width:551px;height:41px;background:#eff0f2;"></div>
<span class="t" style="top: 671.25px; font-size: 14.5px; color: rgb(27, 30, 37); left: 413.5px; letter-spacing: -0.24px;">Tủ kính 1</span>
<span class="t" style="top: 712.25px; font-size: 14.5px; color: rgb(27, 30, 37); left: 413.5px; letter-spacing: 0.01px;">Tủ kính 2</span>
</div>
</body></html>
